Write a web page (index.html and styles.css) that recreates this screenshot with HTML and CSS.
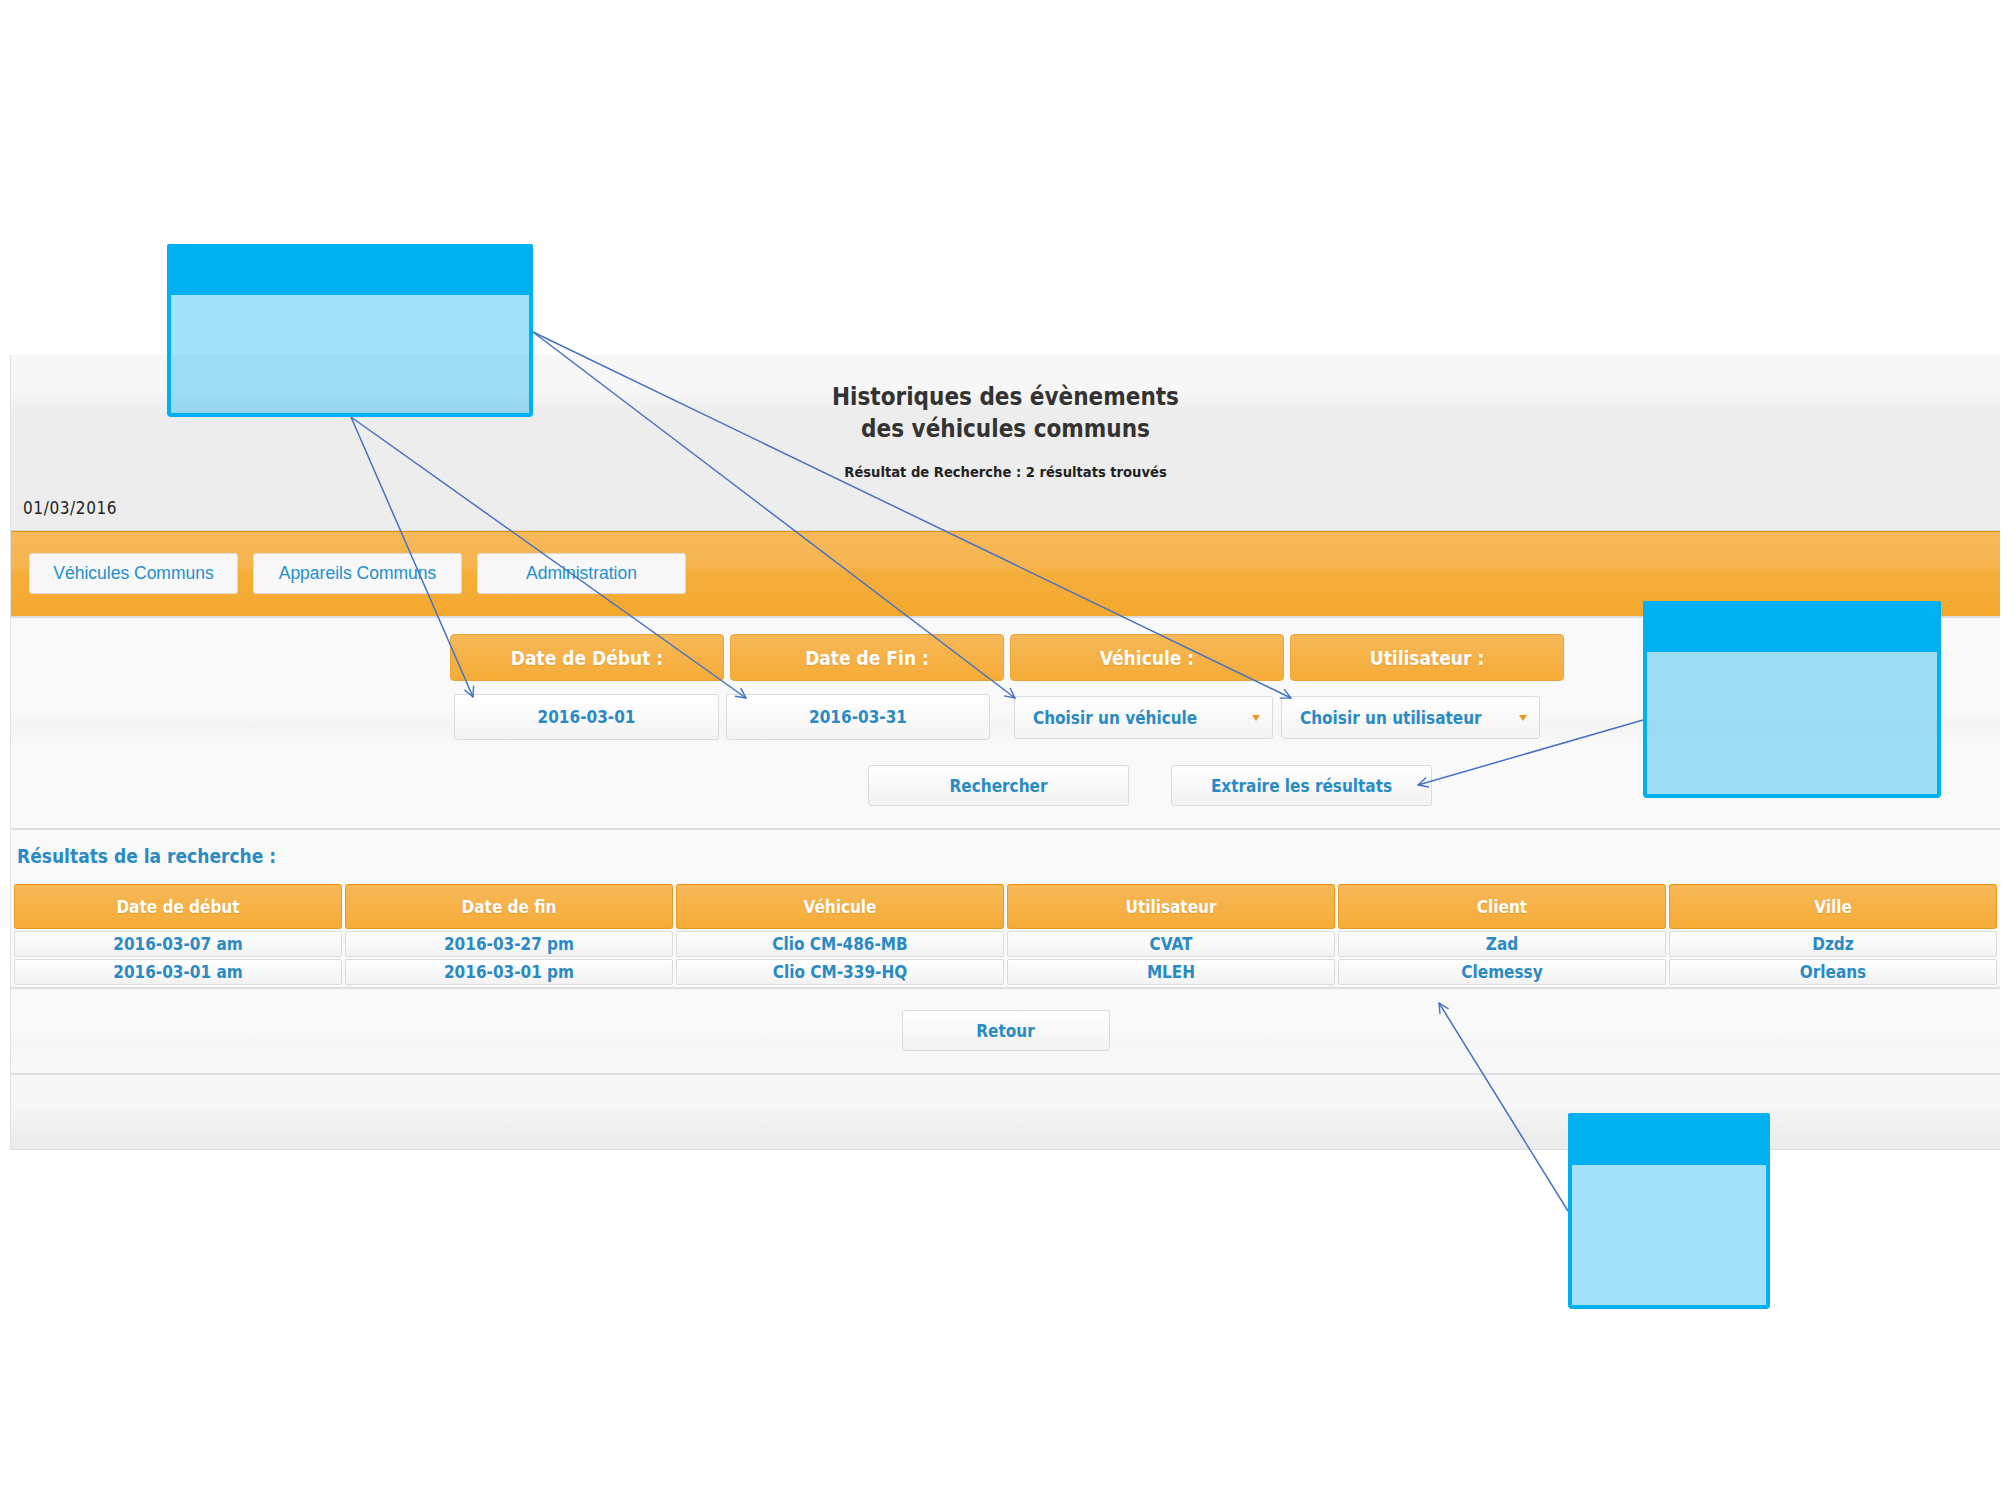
FILE: index.html
```html
<!DOCTYPE html>
<html lang="fr">

<head>
    <meta charset="UTF-8">
    <title>Historiques des évènements des véhicules communs</title>
    <link rel="stylesheet" href="styles.css">
</head>

<body>
    <div class="page">
        <header class="top">
            <h1>Historiques des évènements<br>des véhicules communs</h1>
            <p class="count">Résultat de Recherche : 2 résultats trouvés</p>
            <p class="today">01/03/2016</p>
        </header>

        <nav class="menu">
            <a class="menu-btn" href="#">Véhicules Communs</a>
            <a class="menu-btn" href="#">Appareils Communs</a>
            <a class="menu-btn" href="#">Administration</a>
        </nav>

        <section class="search">
            <div class="labels">
                <div class="label">Date de Début :</div>
                <div class="label">Date de Fin :</div>
                <div class="label">Véhicule :</div>
                <div class="label">Utilisateur :</div>
            </div>
            <div class="fields">
                <div class="field date-start">2016-03-01</div>
                <div class="field date-end">2016-03-31</div>
                <div class="field choice choice-car">Choisir un véhicule<span class="caret"></span></div>
                <div class="field choice choice-user">Choisir un utilisateur<span class="caret"></span></div>
            </div>
            <div class="actions">
                <button class="btn">Rechercher</button>
                <button class="btn">Extraire les résultats</button>
            </div>
        </section>

        <section class="results">
            <h2>Résultats de la recherche :</h2>
            <table>
                <thead>
                    <tr>
                        <th>Date de début</th>
                        <th>Date de fin</th>
                        <th>Véhicule</th>
                        <th>Utilisateur</th>
                        <th>Client</th>
                        <th>Ville</th>
                    </tr>
                </thead>
                <tbody>
                    <tr>
                        <td>2016-03-07 am</td>
                        <td>2016-03-27 pm</td>
                        <td>Clio CM-486-MB</td>
                        <td>CVAT</td>
                        <td>Zad</td>
                        <td>Dzdz</td>
                    </tr>
                    <tr>
                        <td>2016-03-01 am</td>
                        <td>2016-03-01 pm</td>
                        <td>Clio CM-339-HQ</td>
                        <td>MLEH</td>
                        <td>Clemessy</td>
                        <td>Orleans</td>
                    </tr>
                </tbody>
            </table>
        </section>

        <section class="back">
            <button class="btn btn-back">Retour</button>
        </section>

        <footer class="bottom"></footer>
    </div>

    <!-- annotations posées sur la maquette -->
    <svg class="notes" width="2016" height="1512" viewBox="0 0 2016 1512">
        <defs>
            <marker id="tip" viewBox="0 0 12 12" refX="11" refY="6" markerWidth="12" markerHeight="12" markerUnits="userSpaceOnUse" orient="auto">
                <path d="M1 1 L11 6 L1 11" fill="none" stroke="#4472c4" stroke-width="1.4"/>
            </marker>
        </defs>

        <g class="note">
            <rect class="note-body" x="169" y="246" width="362" height="169" rx="2"/>
            <rect class="note-head" x="167" y="244" width="366" height="51" rx="2"/>
        </g>
        <g class="note">
            <rect class="note-body" x="1645" y="603" width="294" height="193" rx="2"/>
            <rect class="note-head" x="1643" y="601" width="298" height="51" rx="2"/>
        </g>
        <g class="note">
            <rect class="note-body" x="1570" y="1115" width="198" height="192" rx="2"/>
            <rect class="note-head" x="1568" y="1113" width="202" height="52" rx="2"/>
        </g>

        <g class="links">
            <line x1="351" y1="417" x2="473" y2="697"/>
            <line x1="351" y1="417" x2="746" y2="698"/>
            <line x1="533" y1="332" x2="1015" y2="698"/>
            <line x1="533" y1="332" x2="1291" y2="698"/>
            <line x1="1643" y1="720" x2="1418" y2="785"/>
            <line x1="1568" y1="1211" x2="1439" y2="1003"/>
        </g>
    </svg>
</body>

</html>
```

FILE: styles.css
```css
body {
    margin: 0;
    background-color: #fff;
    font-family: "DejaVu Sans Condensed", "DejaVu Sans", sans-serif;
    font-stretch: condensed;
    position: relative;
    width: 2016px;
    height: 1512px;
    overflow: hidden;
}

.page {
    margin: 355px 16px 0 10px;
    border-left: 1px solid #e2e2e2;
}

/* en-tête gris */
.top {
    box-sizing: border-box;
    height: 176px;
    padding-top: 26px;
    background: linear-gradient(#f7f7f7 0, #f7f7f7 36px, #ededed 56px, #ededed 100%);
    border-bottom: 1px solid #d9d9d9;
}

.top h1 {
    margin: 0;
    text-align: center;
    font-size: 24px;
    line-height: 32px;
    color: #333;
}

.count {
    margin: 17px 0 0;
    text-align: center;
    font-size: 14.6px;
    font-weight: bold;
    line-height: 20px;
    color: #222;
}

.today {
    margin: 16px 0 0 12px;
    font-size: 17px;
    letter-spacing: 0.6px;
    line-height: 20px;
    color: #222;
}

/* barre orange */
.menu {
    box-sizing: border-box;
    height: 87px;
    display: flex;
    gap: 15px;
    padding: 21px 0 0 18px;
    border-top: 1px solid #e8930c;
    border-bottom: 2px solid #dcdcdc;
    background: linear-gradient(#f7b858 0, #f6b550 40%, #f5ae3c 48%, #f4a82d 100%);
}

.menu-btn {
    box-sizing: border-box;
    width: 209px;
    height: 41px;
    display: flex;
    align-items: center;
    justify-content: center;
    background-color: #f8f8f8;
    border: 1px solid #dcdcdc;
    border-radius: 3px;
    font-family: "Liberation Sans", Arial, sans-serif;
    font-stretch: normal;
    font-size: 17.5px;
    color: #1e8fd0;
    text-decoration: none;
}

/* formulaire de recherche */
.search {
    box-sizing: border-box;
    height: 212px;
    padding-top: 16px;
    background: linear-gradient(#f9f9f9 0, #f9f9f9 45%, #f4f4f4 52%, #f9f9f9 60%, #f9f9f9 100%);
    border-bottom: 2px solid #dedede;
}

.labels {
    display: flex;
    gap: 6px;
    padding-left: 439px;
}

.label {
    box-sizing: border-box;
    width: 274px;
    height: 47px;
    display: flex;
    align-items: center;
    justify-content: center;
    background: linear-gradient(#f7b858, #f5ac37);
    border: 1px solid #eba33c;
    border-radius: 4px;
    color: #fff;
    font-size: 19px;
    font-weight: bold;
    text-shadow: 0 1px 1px rgba(180, 100, 0, 0.3);
}

.fields {
    display: flex;
    margin-top: 13px;
    padding-left: 443px;
}

.field {
    box-sizing: border-box;
    height: 46px;
    display: flex;
    align-items: center;
    justify-content: center;
    background: linear-gradient(#fff, #f3f3f3);
    border: 1px solid #dcdcdc;
    border-radius: 3px;
    color: #2a8ac4;
    font-size: 17px;
    font-weight: bold;
}

.date-start {
    width: 265px;
}

.date-end {
    width: 264px;
    margin-left: 7px;
}

.choice {
    width: 259px;
    height: 43px;
    margin-top: 2px;
    justify-content: space-between;
    padding: 0 12px 0 18px;
}

.choice-car {
    margin-left: 24px;
}

.choice-user {
    margin-left: 8px;
}

.caret {
    width: 0;
    height: 0;
    border-left: 4px solid transparent;
    border-right: 4px solid transparent;
    border-top: 6px solid #f0961e;
}

.actions {
    display: flex;
    gap: 42px;
    margin-top: 25px;
    padding-left: 857px;
}

.btn {
    box-sizing: border-box;
    width: 261px;
    height: 41px;
    background: linear-gradient(#fff, #f2f2f2);
    border: 1px solid #dcdcdc;
    border-radius: 3px;
    font-family: inherit;
    font-stretch: condensed;
    color: #2a8ac4;
    font-size: 17px;
    font-weight: bold;
    cursor: pointer;
}

/* résultats */
.results {
    background-color: #f9f9f9;
    border-bottom: 2px solid #dedede;
}

.results h2 {
    margin: 0;
    padding: 13px 0 0 6px;
    font-size: 19px;
    line-height: 26px;
    color: #2a8ac4;
}

table {
    width: 100%;
    table-layout: fixed;
    margin-top: 13px;
    border-collapse: separate;
    border-spacing: 3px 2px;
}

th {
    height: 45px;
    padding: 0;
    box-sizing: border-box;
    background: linear-gradient(#f7b858, #f5ac37);
    border: 1px solid #ec9a22;
    border-top-color: #e8900c;
    border-radius: 3px;
    color: #fff;
    font-size: 17px;
    font-weight: bold;
    text-shadow: 0 1px 1px rgba(180, 100, 0, 0.3);
}

td {
    height: 26px;
    padding: 0;
    box-sizing: border-box;
    text-align: center;
    background: linear-gradient(#fff, #f2f2f2);
    border: 1px solid #dcdcdc;
    border-radius: 2px;
    color: #2a8ac4;
    font-size: 17px;
    font-weight: bold;
    line-height: 24px;
}

.back {
    box-sizing: border-box;
    height: 86px;
    padding-top: 21px;
    display: flex;
    justify-content: center;
    background: linear-gradient(#f9f9f9 0, #f9f9f9 50%, #f6f6f6 60%, #f9f9f9 100%);
    border-bottom: 2px solid #dedede;
}

.btn-back {
    width: 208px;
}

.bottom {
    height: 74px;
    background: linear-gradient(#f7f7f7 0, #f7f7f7 40%, #ececec 85%, #ececec 100%);
    border-bottom: 1px solid #dadada;
}

/* annotations */
.notes {
    position: absolute;
    top: 0;
    left: 0;
    pointer-events: none;
}

.note-body {
    fill: rgba(0, 176, 240, 0.37);
    stroke: #00b0f0;
    stroke-width: 4;
}

.note-head {
    fill: #00b0f0;
}

.links line {
    stroke: #4472c4;
    stroke-width: 1.5;
    marker-end: url(#tip);
}
```
